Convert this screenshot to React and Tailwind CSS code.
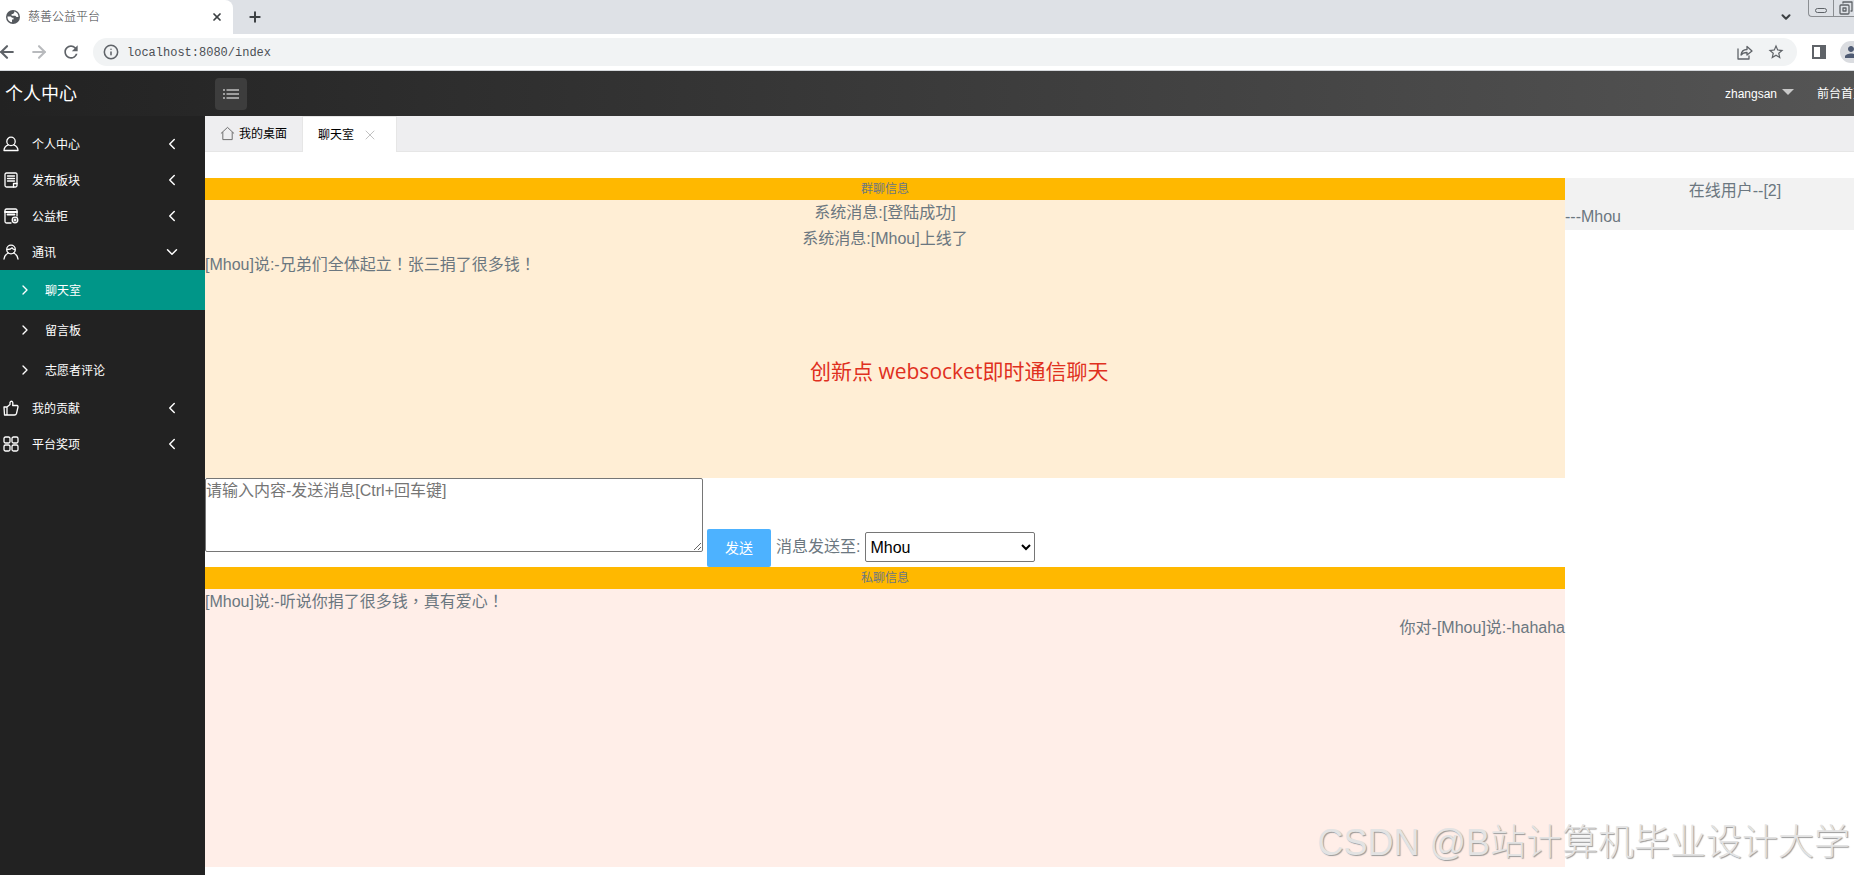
import React from "react";
import { ChevronDown, ChevronLeft, ChevronRight, Plus, X, ArrowLeft, ArrowRight, Info } from "lucide-react";
import { MdRefresh, MdPerson, MdStarBorder } from "react-icons/md";

const stroke = { fill: "none", stroke: "currentColor", strokeWidth: 1.3, strokeLinecap: "round", strokeLinejoin: "round" };

function Glyph({ name }) {
  const shapes = {
    user: (
      <>
        <circle cx="8" cy="5.4" r="4.2" />
        <path d="M5.4 8.8C2.6 9.8 1 11.8 1 14.5h14c0-2.700-1.600-4.700-4.400-5.700" />
      </>
    ),
    note: (
      <>
        <path d="M14 11V2.500Q14 1 12.500 1H3.500Q2 1 2 2.500V13.500Q2 15 3.500 15H12.500Q14 15 14 13.500V11" />
        <path d="M4.500 4h7M4.500 6.500h7M4.500 9h7M10.500 15v-3.500H14" />
      </>
    ),
    form: (
      <>
        <path d="M14 8V2.500Q14 1 12.500 1H3.500Q2 1 2 2.500V13.500Q2 15 3.500 15H8" />
        <path d="M2 4h12M4.500 6.500h7" strokeWidth="1.800" />
        <circle cx="12" cy="12" r="2.800" />
        <path d="M12 11v2M11 12h2" />
      </>
    ),
    friends: (
      <>
        <circle cx="8" cy="5.500" r="4.300" />
        <path d="M4.500 5.500C6.500 5.500 8 5 9 3.800c.5 1 1.300 1.600 2.600 1.800M5.500 9C3 10 1.300 12 1 15M10.500 9c2.500 1 4.200 3 4.500 6" />
      </>
    ),
    praise: <path d="M1 7h3v8H1.500zM4 7l3-2.500V2.500Q7.500 1 9 1.300 10.300 2 9.700 5.500H14Q15.300 5.800 15 7l-1.500 6.500Q13 15 11.500 15H4" />,
    grid: (
      <>
        <rect x="1" y="1" width="6" height="6" rx="1.500" />
        <rect x="9" y="1" width="6" height="6" rx="1.500" />
        <rect x="1" y="9" width="6" height="6" rx="1.500" />
        <rect x="9" y="9" width="6" height="6" rx="1.500" />
      </>
    ),
  };
  return (
    <svg viewBox="0 0 16 16" className="size-4 shrink-0" {...stroke} aria-hidden="true">
      {shapes[name]}
    </svg>
  );
}

const menu = [
  { icon: "user", label: "个人中心" },
  { icon: "note", label: "发布板块" },
  { icon: "form", label: "公益柜" },
  { icon: "friends", label: "通讯", children: ["聊天室", "留言板", "志愿者评论"] },
  { icon: "praise", label: "我的贡献" },
  { icon: "grid", label: "平台奖项" },
];

function BrowserChrome() {
  return (
    <div className="font-['Liberation_Sans','Noto_Sans_CJK_SC',sans-serif]">
      <div className="flex h-[34px] bg-[#dee1e6]">
        <div className="flex w-[233px] items-center rounded-tr-lg bg-white pl-[6px] pr-[6px] text-[#3c4043]">
          <svg viewBox="0 0 14 14" className="size-[14px] shrink-0" aria-hidden="true">
            <circle cx="7" cy="7" r="7" fill="#55595e" />
            <path d="M1.500 6.500h3.200l1.300 1.300h1.500v1.700H6v2.800C3.300 12 1.300 9.500 1.500 6.500zM8.200 1.600v1.200L7 4H5.600v1.800h3.700l1.200 1.300h1.900C12.600 4.300 10.700 2 8.200 1.600z" fill="#ffffff" />
          </svg>
          <span className="ml-2 flex-1 text-xs leading-4 font-light">慈善公益平台</span>
          <button aria-label="关闭标签页" className="p-1"><X className="size-3" strokeWidth={3.500} /></button>
        </div>
        <button aria-label="新标签页" className="px-[14px]"><Plus className="size-4 text-[#3c4043]" strokeWidth={3} /></button>
        <div className="flex-1" />
        <button aria-label="搜索标签页" className="px-[15px]"><ChevronDown className="size-[14px] text-[#3c4043]" strokeWidth={3.500} /></button>
        <div className="flex h-[17px] w-[46px] self-start overflow-hidden rounded-bl border-b border-l border-[#8b8e92]">
          <button aria-label="最小化" className="flex w-[25px] items-center justify-center border-r border-[#8b8e92] pt-1">
            <span className="h-[5px] w-3 rounded-sm border border-[#5f6368]" />
          </button>
          <button aria-label="还原" className="pl-[5px]">
            <svg viewBox="0 0 14 14" className="size-[14px] text-[#5f6368]" {...stroke}>
              <rect x="1" y="4" width="9" height="9" rx="1" />
              <rect x="4" y="7" width="3" height="3" />
              <path d="M4 2V1h9v9h-1" />
            </svg>
          </button>
        </div>
      </div>
      <div className="flex h-[37px] items-center border-b border-[#d5d8dc] bg-white text-[#5f6368]">
        <button aria-label="后退" className="-ml-[3px]"><ArrowLeft className="size-5" strokeWidth={2.500} /></button>
        <button aria-label="前进" className="ml-3 text-[#b8babd]"><ArrowRight className="size-5" strokeWidth={2.500} /></button>
        <button aria-label="刷新" className="ml-3"><MdRefresh className="size-5" /></button>
        <div className="ml-3 flex h-7 flex-1 items-center rounded-full bg-[#f1f3f4] pr-3 pl-[10px]">
          <Info className="size-4" strokeWidth={2.300} />
          <input
            aria-label="地址"
            defaultValue="localhost:8080/index"
            className="ml-2 min-w-0 flex-1 bg-transparent pt-px font-['Liberation_Mono',monospace] text-xs text-[#4b4f54] outline-none"
          />
          <button aria-label="分享">
            <svg viewBox="0 0 16 16" className="size-4" {...stroke}>
              <path d="M1 5v10h11v-3M4 11c.5-4 3-5.500 6-5.500V2.500L15 7l-5 4V8.500C7.500 8.500 5.500 9 4 11z" />
            </svg>
          </button>
          <button aria-label="收藏" className="ml-[14px]"><MdStarBorder className="size-[18px]" /></button>
        </div>
        <button aria-label="侧边栏" className="ml-[15px] h-[14px] w-[14px] border-2 border-r-[6px] border-[#5f6368]" />
        <div className="ml-[14px] flex h-[22px] w-[14px] justify-start overflow-hidden rounded-l-full bg-[#dadce0]">
          <MdPerson className="ml-[2px] size-[18px] shrink-0 self-center text-[#4f5b73]" />
        </div>
      </div>
    </div>
  );
}

function Header() {
  return (
    <header className="flex h-[45px] items-center bg-linear-to-r from-[#222222] to-[#555555] text-white">
      <a href="#home" className="w-[215px] pl-[5px] text-lg">个人中心</a>
      <button aria-label="折叠菜单" className="flex size-8 items-center justify-center rounded-sm bg-[#3d3d3d]">
        <svg viewBox="0 0 16 12" className="h-3 w-4" fill="none" stroke="currentColor" strokeWidth="1.200" aria-hidden="true">
          <path d="M0 2h2M3.500 2H16M0 6h2M3.500 6H16M0 10h2M3.500 10H16" />
        </svg>
      </button>
      <div className="flex-1" />
      <button className="flex items-center gap-[5px] text-xs">
        zhangsan
        <span className="mb-1 border-x-[6px] border-t-[6px] border-x-transparent border-t-[#c8c8c8]" />
      </button>
      <div className="ml-[23px] w-[37px] overflow-hidden text-xs whitespace-nowrap">
        <a href="#front">前台首页</a>
      </div>
    </header>
  );
}

function Sidebar() {
  return (
    <nav className="w-[205px] shrink-0 bg-[#222222] pt-[10px] text-xs text-white">
      {menu.map((item) => (
        <div key={item.label}>
          <a href="#menu" className="flex h-9 items-center pr-6 pl-[3px]">
            <Glyph name={item.icon} />
            <span className="ml-[13px] flex-1 pt-[2px]">{item.label}</span>
            {item.children ? <ChevronDown className="size-[18px]" /> : <ChevronLeft className="size-[18px]" />}
          </a>
          {item.children?.map((child, i) => (
            <a key={child} href="#menu" className={i === 0 ? "flex h-10 items-center bg-[#009688] pl-[17px]" : "flex h-10 items-center pl-[17px]"}>
              <ChevronRight className="size-4" />
              <span className="ml-3 pt-[2px]">{child}</span>
            </a>
          ))}
        </div>
      ))}
    </nav>
  );
}

function SectionTitle({ children }) {
  return <h2 className="h-[22px] bg-[#ffb800] text-center text-xs leading-[22px]">{children}</h2>;
}

// Full-width punctuation set in the middle of its em box.
function Mark({ children }) {
  return <span lang="zh-TW" className="font-['Noto_Sans_CJK_TC',sans-serif] leading-none">{children}</span>;
}

function Chat() {
  return (
    <div className="mt-[26px] grid w-[calc(100%+51px)] grid-cols-[4fr_1fr] items-start text-base leading-[26px] text-[#6b7780]">
      <div>
        <SectionTitle>群聊信息</SectionTitle>
        <section className="relative h-[278px] bg-[#ffeed5]">
          <p className="text-center">系统消息:[登陆成功]</p>
          <p className="text-center">系统消息:[Mhou]上线了</p>
          <p>[Mhou]说:-兄弟们全体起立<Mark>！</Mark>张三捐了很多钱<Mark>！</Mark></p>
          <p className="absolute top-[155px] left-[605px] font-['Open_Sans','Noto_Sans_CJK_SC',sans-serif] text-[21px] leading-8 whitespace-nowrap text-[#e0301e]">
            创新点 websocket即时通信聊天
          </p>
        </section>
        <form className="flex h-[89px] items-end gap-1" onSubmit={(e) => e.preventDefault()}>
          <textarea
            aria-label="消息内容"
            placeholder="请输入内容-发送消息[Ctrl+回车键]"
            className="h-[74px] w-[498px] self-start rounded-xs border border-[#767676] bg-white leading-6 placeholder:text-[#757575]"
          />
          <button className="h-[38px] w-16 rounded-xs bg-[#4db2ff] text-sm text-white">发送</button>
          <label htmlFor="target" className="mb-[7px] ml-px">消息发送至:</label>
          <select id="target" defaultValue="Mhou" className="mb-[5px] ml-px h-[30px] w-[170px] rounded-xs border border-[#767676] bg-white text-black">
            <option>Mhou</option>
          </select>
        </form>
        <SectionTitle>私聊信息</SectionTitle>
        <section className="h-[278px] bg-[#ffeee8]">
          <p>[Mhou]说:-听说你捐了很多钱<Mark>，</Mark>真有爱心<Mark>！</Mark></p>
          <p className="text-right">你对-[Mhou]说:-hahaha</p>
        </section>
      </div>
      <aside className="bg-[#f2f2f2]">
        <p className="text-center">在线用户--[2]</p>
        <p>---Mhou</p>
      </aside>
    </div>
  );
}

export default function App() {
  return (
    <div className="relative flex min-h-screen flex-col overflow-hidden bg-white font-['Liberation_Sans','Noto_Sans_CJK_SC',sans-serif]">
      <BrowserChrome />
      <Header />
      <div className="flex flex-1">
        <Sidebar />
        <main className="min-w-0 flex-1">
          <div className="flex h-9 border-b border-[#e6e6e6] bg-[#eeeef0] text-xs text-black">
            <button className="flex items-center gap-1 px-[15px]">
              <svg viewBox="0 0 16 16" className="size-[15px] text-[#666666]" fill="none" stroke="currentColor" aria-hidden="true">
                <path d="M1 8L8 1.500 15 8M3 6.500V14.500H13V6.500" />
              </svg>
              我的桌面
            </button>
            <div className="-mb-px flex items-center border-x border-t border-[#e6e6e6] bg-white pr-[18px] pl-[15px]">
              <span>聊天室</span>
              <button aria-label="关闭聊天室" className="ml-2"><X className="size-4 text-[#c2c2c2]" strokeWidth={1.500} /></button>
            </div>
          </div>
          <Chat />
        </main>
      </div>
      <div className="pointer-events-none absolute right-1 bottom-2 text-4xl leading-[48px] font-light whitespace-nowrap text-[#e3e3e3] [text-shadow:1px_1px_1px_#999999]">
        CSDN @B站计算机毕业设计大学
      </div>
    </div>
  );
}
